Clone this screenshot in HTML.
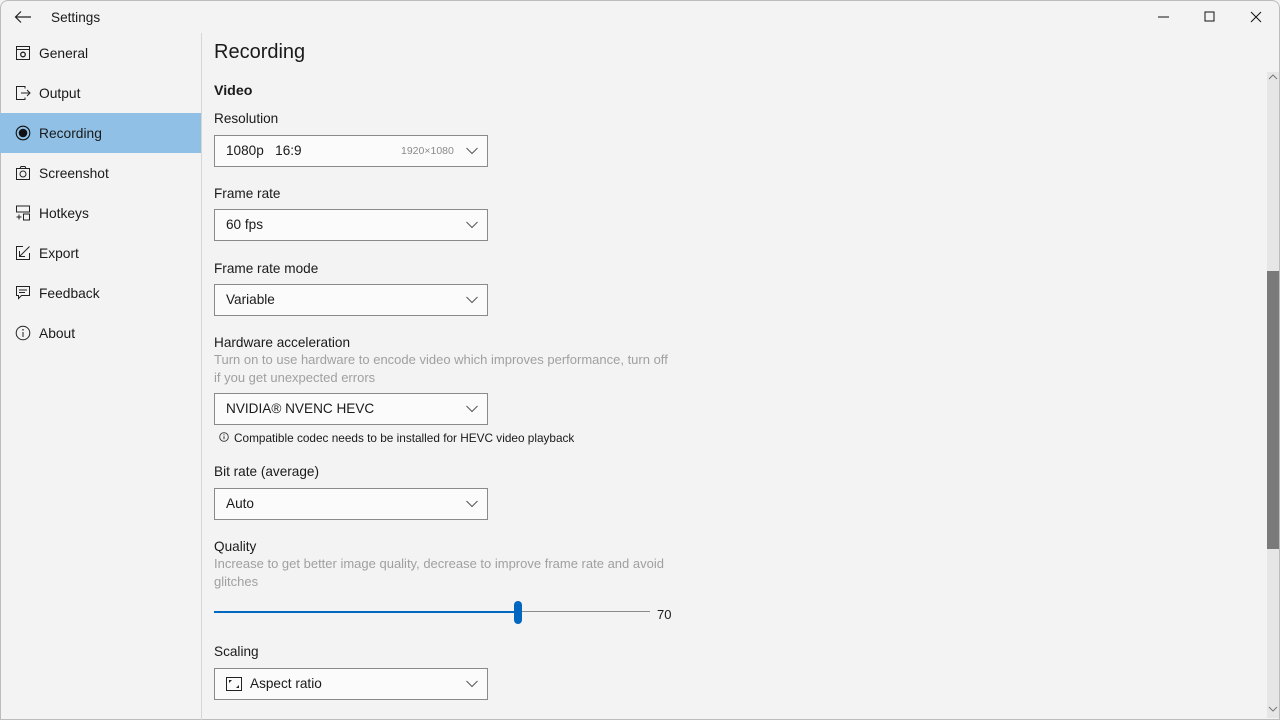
<!DOCTYPE html>
<html><head><meta charset="utf-8"><style>
*{margin:0;padding:0;box-sizing:border-box}
body{width:1280px;height:720px;background:#f3f3f3;font-family:"Liberation Sans",sans-serif;color:#1a1a1a;position:relative;overflow:hidden;font-size:13.4px}
.a{position:absolute;white-space:nowrap}
.nav{position:absolute;left:0;width:201px;height:40px}
.nav svg{position:absolute;left:15px;top:12px}
.nav span{position:absolute;left:39px;top:13px;font-size:13.8px}
.sel{background:#90c0e5}
.lbl{position:absolute;left:214px;font-size:13.6px}
.desc{position:absolute;left:214px;font-size:13px;color:#a0a0a0;line-height:18px;width:480px}
.dd{position:absolute;left:214px;width:274px;height:32px;background:#fbfbfb;border:1px solid #8a8a8a}
.dd span{position:absolute;left:11px;top:7px;font-size:13.6px}
.dd svg{position:absolute;right:9px;top:11px}
</style></head><body>
<div style="position:absolute;inset:0;border:1px solid #bcbcbc;border-radius:8px 8px 0 0;pointer-events:none"></div>
<svg class="a" style="left:14px;top:10px" width="18" height="14"><path d="M17 7H2M7 1.5L1.5 7 7 12.5" stroke="#222" stroke-width="1.2" fill="none"/></svg>
<div class="a" style="left:51px;top:10px;font-size:13.6px">Settings</div>
<svg class="a" style="left:1158px;top:16px" width="12" height="2"><path d="M0 1h11" stroke="#111"/></svg>
<svg class="a" style="left:1204px;top:11px" width="12" height="12"><rect x="1" y="1" width="9" height="9" stroke="#111" fill="none"/></svg>
<svg class="a" style="left:1250px;top:11px" width="12" height="12"><path d="M1 1l10 10M11 1L1 11" stroke="#111"/></svg>
<div class="a" style="left:201px;top:33px;width:1px;height:687px;background:#d6d6d6"></div>

<div class="nav" style="top:33px"><svg width="16" height="16"><rect x="1.5" y="1.5" width="13" height="13" fill="none" stroke="#222"/><path d="M1.5 4.5h13" stroke="#222"/><circle cx="8" cy="9.5" r="2.3" fill="none" stroke="#222" stroke-width="1.3"/></svg><span>General</span></div>
<div class="nav" style="top:73px"><svg width="16" height="16"><path d="M10 3.5V1.5H1.5v13H10v-2M6 8h9M12 5l3 3-3 3" fill="none" stroke="#222"/></svg><span>Output</span></div>
<div class="nav sel" style="top:113px"><svg width="16" height="16"><circle cx="8" cy="8" r="6.8" fill="none" stroke="#111" stroke-width="1.1"/><circle cx="8" cy="8" r="4.3" fill="#111"/></svg><span>Recording</span></div>
<div class="nav" style="top:153px"><svg width="16" height="16"><path d="M1.5 3.5h13v11h-13z M5 3.5l1-2h4l1 2" fill="none" stroke="#222"/><circle cx="8" cy="9" r="3" fill="none" stroke="#222"/></svg><span>Screenshot</span></div>
<div class="nav" style="top:193px"><svg width="16" height="16"><rect x="1.5" y="1" width="13" height="6" fill="none" stroke="#222"/><rect x="8.5" y="9" width="6" height="6" fill="none" stroke="#222"/><path d="M1.5 12h5M4 9.5v5" stroke="#222"/></svg><span>Hotkeys</span></div>
<div class="nav" style="top:233px"><svg width="16" height="16"><path d="M8 1.5H1.5v13h13V8M14.5 1.5l-10 10M4.5 6v5.5H10" fill="none" stroke="#222"/></svg><span>Export</span></div>
<div class="nav" style="top:273px"><svg width="16" height="16"><path d="M1.5 1.5h13v9h-8l-3 3v-3h-2z M4 5h8M4 7.5h6" fill="none" stroke="#222"/></svg><span>Feedback</span></div>
<div class="nav" style="top:313px"><svg width="16" height="16"><circle cx="8" cy="8" r="6.8" fill="none" stroke="#222"/><path d="M8 7v5" stroke="#222"/><circle cx="8" cy="4.8" r=".8" fill="#222"/></svg><span>About</span></div>

<div class="a" style="left:214px;top:41px;font-size:20px">Recording</div>
<div class="a" style="left:214px;top:83px;font-size:14.2px;font-weight:bold">Video</div>
<div class="lbl" style="top:111px">Resolution</div>
<div class="dd" style="top:135px"><span>1080p&nbsp;&nbsp;&nbsp;16:9</span><span style="left:186px;top:9px;font-size:10.5px;color:#8a8a8a">1920×1080</span><svg width="12" height="8"><path d="M.5 1l5.5 5.5L11.5 1" fill="none" stroke="#555"/></svg></div>
<div class="lbl" style="top:186px">Frame rate</div>
<div class="dd" style="top:209px"><span>60 fps</span><svg width="12" height="8"><path d="M.5 1l5.5 5.5L11.5 1" fill="none" stroke="#555"/></svg></div>
<div class="lbl" style="top:261px">Frame rate mode</div>
<div class="dd" style="top:284px"><span>Variable</span><svg width="12" height="8"><path d="M.5 1l5.5 5.5L11.5 1" fill="none" stroke="#555"/></svg></div>
<div class="lbl" style="top:335px">Hardware acceleration</div>
<div class="desc" style="top:351px">Turn on to use hardware to encode video which improves performance, turn off<br>if you get unexpected errors</div>
<div class="dd" style="top:393px"><span>NVIDIA® NVENC HEVC</span><svg width="12" height="8"><path d="M.5 1l5.5 5.5L11.5 1" fill="none" stroke="#555"/></svg></div>
<svg class="a" style="left:219px;top:432px" width="10" height="10"><circle cx="5" cy="5" r="4.3" fill="none" stroke="#333" stroke-width=".9"/><path d="M5 4.3v3" stroke="#333"/><circle cx="5" cy="2.8" r=".6" fill="#333"/></svg>
<div class="a" style="left:234px;top:431px;font-size:11.8px">Compatible codec needs to be installed for HEVC video playback</div>
<div class="lbl" style="top:464px">Bit rate (average)</div>
<div class="dd" style="top:488px"><span>Auto</span><svg width="12" height="8"><path d="M.5 1l5.5 5.5L11.5 1" fill="none" stroke="#555"/></svg></div>
<div class="lbl" style="top:539px">Quality</div>
<div class="desc" style="top:555px">Increase to get better image quality, decrease to improve frame rate and avoid<br>glitches</div>
<div class="a" style="left:214px;top:611px;width:304px;height:2px;background:#0067c0"></div>
<div class="a" style="left:518px;top:611px;width:132px;height:1px;background:#8a8a8a"></div>
<div class="a" style="left:514px;top:601px;width:8px;height:23px;border-radius:4px;background:#0067c0"></div>
<div class="a" style="left:657px;top:607px;font-size:13px">70</div>
<div class="lbl" style="top:644px">Scaling</div>
<div class="dd" style="top:668px"><svg style="left:11px;top:8px" width="16" height="14"><rect x=".5" y=".5" width="15" height="13" fill="none" stroke="#222"/><path d="M3 3h3L3 6z M13 11h-3l3-3z" fill="#222"/></svg><span style="left:35px">Aspect ratio</span><svg width="12" height="8"><path d="M.5 1l5.5 5.5L11.5 1" fill="none" stroke="#555"/></svg></div>

<div class="a" style="left:1267px;top:72px;width:12px;height:646px;background:#e6e6e6"></div>
<div class="a" style="left:1267px;top:271px;width:12px;height:278px;background:#7a7a7a"></div>
<svg class="a" style="left:1268px;top:74px" width="10" height="6"><path d="M1 5l4-4 4 4" fill="none" stroke="#777"/></svg>
<svg class="a" style="left:1268px;top:706px" width="10" height="6"><path d="M1 1l4 4 4-4" fill="none" stroke="#777"/></svg>
</body></html>
